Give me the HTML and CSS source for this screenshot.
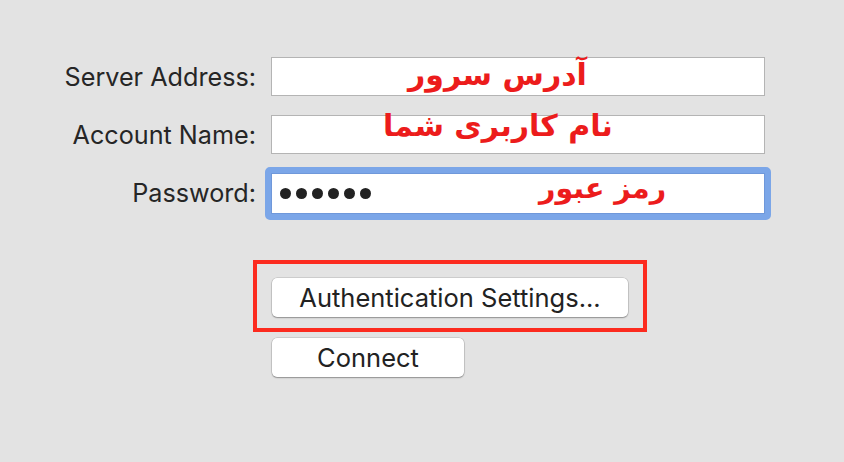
FILE: index.html
```html
<!DOCTYPE html>
<html>
<head>
<meta charset="utf-8">
<link rel="stylesheet" href="styles.css">
</head>
<body>
<div class="page">
  <div class="form">
    <label class="label">Server Address:</label>
    <div class="field">
      <span class="note note-server" dir="rtl">آدرس سرور</span>
    </div>
    <label class="label">Account Name:</label>
    <div class="field">
      <span class="note note-account" dir="rtl">نام کاربری شما</span>
    </div>
    <label class="label">Password:</label>
    <div class="field field-focus">
      <div class="ring"></div>
      <div class="dots"><i></i><i></i><i></i><i></i><i></i><i></i></div>
      <span class="note note-pass" dir="rtl">رمز عبور</span>
    </div>
  </div>
  <div class="buttons">
    <div class="btn btn-auth">Authentication Settings...<div class="highlight"></div></div>
    <div class="btn btn-connect">Connect</div>
  </div>
</div>
</body>
</html>
```
FILE: styles.css
```css
html, body {
  margin: 0;
  padding: 0;
  background: #e3e3e3;
  width: 844px;
  height: 462px;
  overflow: hidden;
  font-family: Inter, "Liberation Sans", Arial, sans-serif;
  color: #222;
}
.page {
  padding-top: 57px;
}
.form {
  display: grid;
  grid-template-columns: 256px 494px;
  grid-auto-rows: 39px;
  column-gap: 15px;
  row-gap: 19px;
}
.label {
  text-align: right;
  font-size: 25.2px;
  line-height: 41px;
  color: #262626;
}
.field {
  position: relative;
  background: #fff;
  border: 1px solid #b4b4b4;
  box-sizing: border-box;
  height: 39px;
}
.field-focus {
  border-color: #6f98da;
  height: 41px;
}
.ring {
  position: absolute;
  left: -7px;
  top: -7px;
  right: -7px;
  bottom: -7px;
  border: 6px solid #7ba6e8;
  border-radius: 5px;
}
.dots {
  display: flex;
  gap: 5px;
  padding-left: 8px;
  height: 100%;
  align-items: center;
}
.dots i {
  width: 11px;
  height: 11px;
  border-radius: 50%;
  background: #222;
  display: block;
}
.note {
  position: absolute;
  font-family: "DejaVu Sans", sans-serif;
  font-weight: bold;
  color: #ec1c1c;
  font-size: 30px;
  line-height: 1;
  white-space: nowrap;
}
.note-server { left: 136px; top: 2px; }
.note-account { left: 111px; top: -5px; }
.note-pass { left: 267px; top: 1px; font-size: 28.5px; }
.buttons {
  margin-top: 66px;
  margin-left: 272px;
  display: flex;
  flex-direction: column;
  align-items: flex-start;
  gap: 21px;
}
.btn {
  position: relative;
  background: #fff;
  border-radius: 5px;
  box-shadow: 0 0 0 0.5px rgba(0,0,0,0.18), 0 1px 1.5px rgba(0,0,0,0.3);
  height: 39px;
  line-height: 40px;
  font-size: 25.5px;
  text-align: center;
  color: #222;
}
.btn-auth { width: 356px; }
.btn-connect { width: 192px; }
.highlight {
  position: absolute;
  left: -19px;
  top: -18px;
  width: 394px;
  height: 72px;
  border: 4px solid #fc2b1f;
  box-sizing: border-box;
}
```
